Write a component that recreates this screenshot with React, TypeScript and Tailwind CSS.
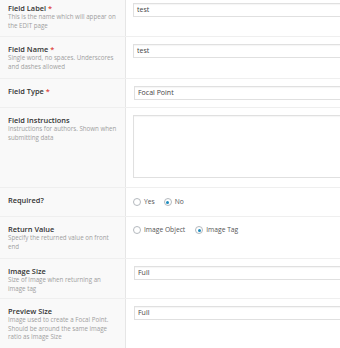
import React from "react";

const font = { fontFamily: '"Open Sans", "Liberation Sans", sans-serif' };

function Label({ text, req, desc }: { text: string; req?: boolean; desc?: string[] }) {
  return (
    <div>
      <div className="text-[7.4px] leading-[10px] font-semibold text-[#333] whitespace-nowrap">
        {text}
        {req && <span className="text-[#dd3d36]"> *</span>}
      </div>
      {desc && (
        <div className="text-[6.2px] leading-[8.5px] text-[#a0a0a0] whitespace-nowrap">
          {desc.map((d, i) => (
            <div key={i}>{d}</div>
          ))}
        </div>
      )}
    </div>
  );
}

function Box({ value }: { value: string }) {
  return (
    <div className="h-[14px] w-[230px] border border-[#e0e0e0] bg-white shadow-[inset_0_1px_1px_rgba(0,0,0,0.04)] pl-[3px] flex items-center text-[7px] text-[#444]">
      {value}
    </div>
  );
}

function Radio({ label, checked }: { label: string; checked?: boolean }) {
  return (
    <div className="flex items-center gap-[3px]">
      <div className="w-[8px] h-[8px] rounded-full border border-[#b4b9be] bg-white flex items-center justify-center">
        {checked && <div className="w-[3px] h-[3px] rounded-full bg-[#1e8cbe]" />}
      </div>
      <span className="text-[6.7px] text-[#555] leading-[12px]">{label}</span>
    </div>
  );
}

function Row({
  left,
  right,
  lpb = "pb-[7px]",
  rpb = "pb-[7px]",
  extra = "",
}: {
  left: React.ReactNode;
  right: React.ReactNode;
  lpb?: string;
  rpb?: string;
  extra?: string;
}) {
  return (
    <div className={`flex border-b border-[#efefef] ${extra}`}>
      <div className={`w-[126px] shrink-0 bg-[#f9f9f9] border-r border-[#e6e6e6] pl-[8px] pt-[7px] ${lpb}`}>
        {left}
      </div>
      <div className={`flex-1 pl-[7px] pt-[7px] ${rpb}`}>{right}</div>
    </div>
  );
}

export default function App() {
  return (
    <div className="w-[340px] h-[348px] overflow-hidden bg-white" style={font}>
      <Row
        extra="-mt-[4px]"
        lpb="pb-[6px]"
        left={<Label text="Field Label" req desc={["This is the name which will appear on", "the EDIT page"]} />}
        right={<Box value="test" />}
      />
      <Row
        left={<Label text="Field Name" req desc={["Single word, no spaces. Underscores", "and dashes allowed"]} />}
        right={<Box value="test" />}
      />
      <Row left={<Label text="Field Type" req />} right={<div className="ml-[1px]"><Box value="Focal Point" /></div>} />
      <Row
        rpb="pb-[9px]"
        left={<Label text="Field Instructions" desc={["Instructions for authors. Shown when", "submitting data"]} />}
        right={<div className="h-[63px] w-[230px] border border-[#e0e0e0] bg-white shadow-[inset_0_1px_1px_rgba(0,0,0,0.04)]" />}
      />
      <Row
        rpb="pb-[8px]"
        left={<Label text="Required?" />}
        right={
          <div className="flex items-center gap-[9px] pt-[1px]">
            <Radio label="Yes" />
            <Radio label="No" checked />
          </div>
        }
      />
      <Row
        left={<Label text="Return Value" desc={["Specify the returned value on front", "end"]} />}
        right={
          <div className="flex items-center gap-[10px]">
            <Radio label="Image Object" />
            <Radio label="Image Tag" checked />
          </div>
        }
      />
      <Row
        lpb="pb-[5px]"
        left={<Label text="Image Size" desc={["Size of image when returning an", "image tag"]} />}
        right={<div className="ml-[1px]"><Box value="Full" /></div>}
      />
      <Row
        left={
          <Label
            text="Preview Size"
            desc={["Image used to create a Focal Point.", "Should be around the same image", "ratio as Image Size"]}
          />
        }
        right={<div className="ml-[1px]"><Box value="Full" /></div>}
      />
    </div>
  );
}
